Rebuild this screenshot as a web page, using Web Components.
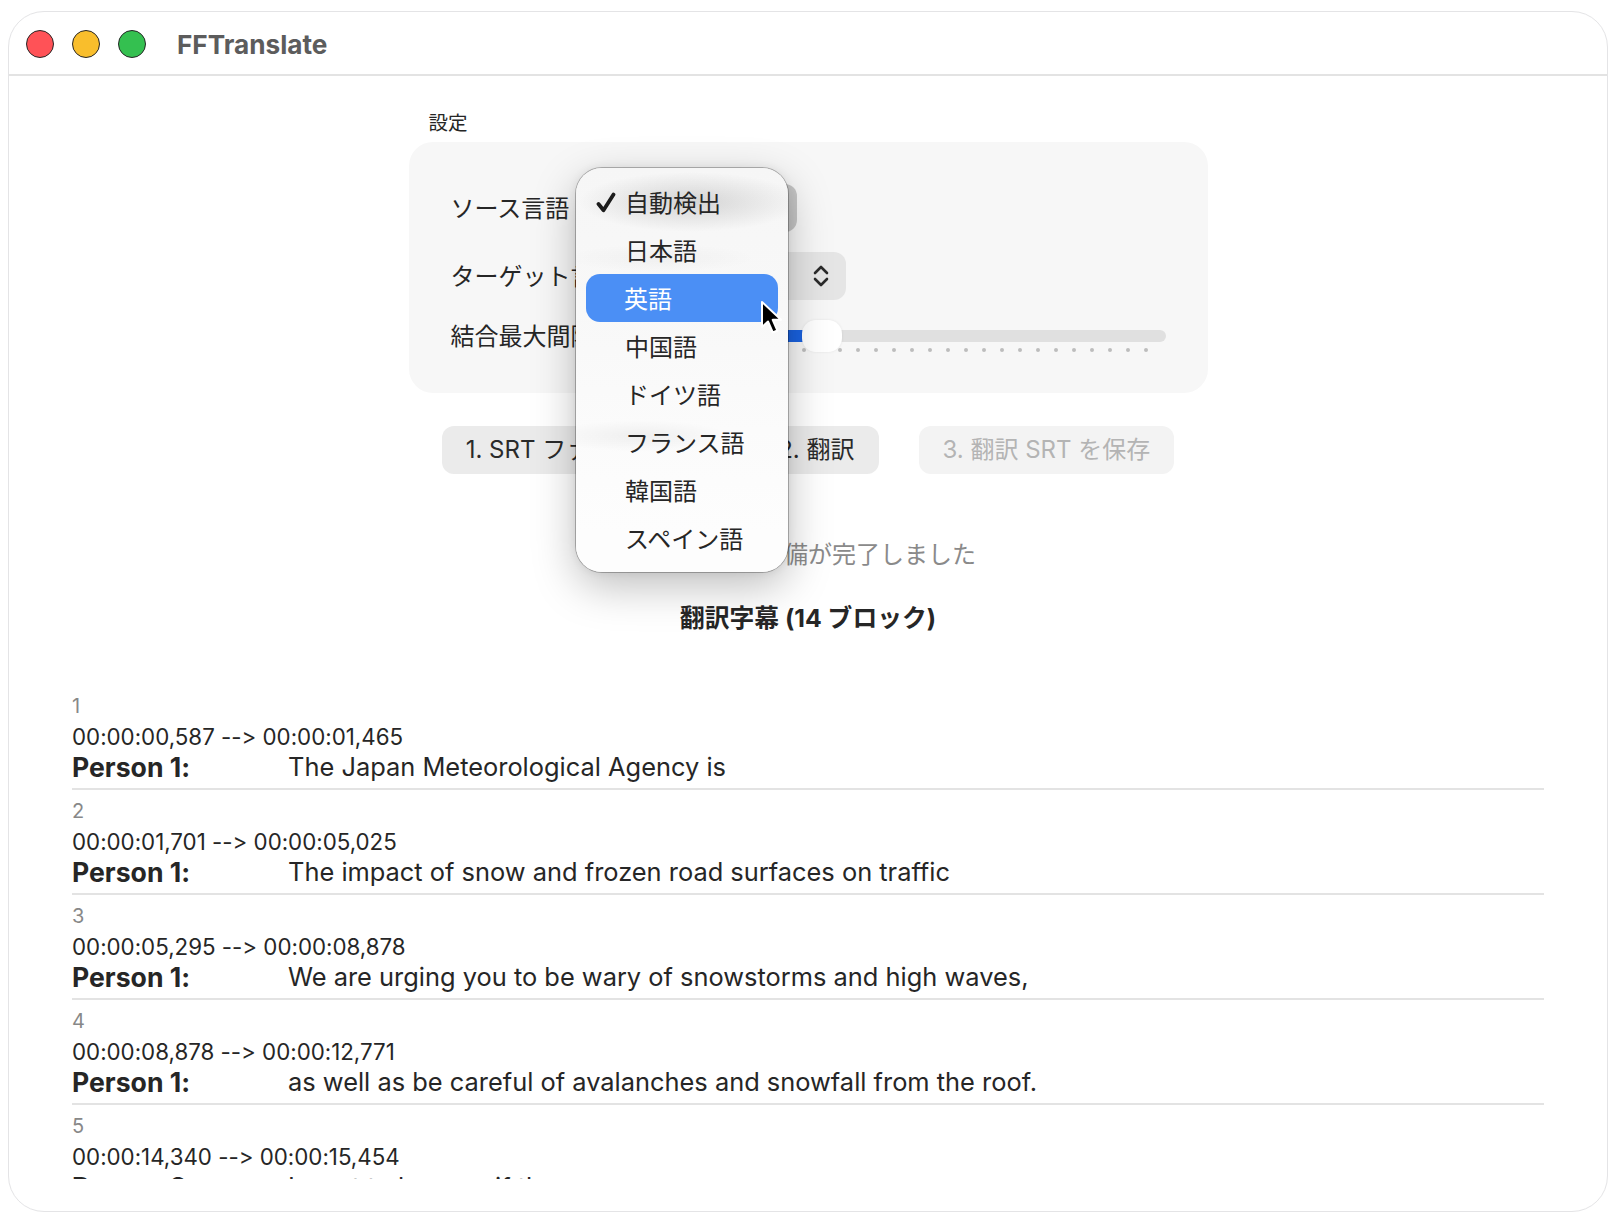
<!DOCTYPE html>
<html lang="ja">
<head>
<meta charset="utf-8">
<title>FFTranslate</title>
<style>
  html, body { margin: 0; background: #fff; }
  body {
    padding: 11px 11px 11px 8px;
    font-family: Inter, "Noto Sans CJK JP", sans-serif;
    font-feature-settings: "calt" 0;
    font-variant-ligatures: none;
    color: #262626;
  }
</style>
</head>
<body>
<ff-window>
  <ff-titlebar slot="titlebar">FFTranslate</ff-titlebar>
  <ff-settings>
    <ff-select label="ソース言語" value="自動検出" width="216" pressed></ff-select>
    <ff-select label="ターゲット言語" value="英語" width="215"></ff-select>
    <ff-slider label="結合最大間隔 (0.5秒)"></ff-slider>
  </ff-settings>
  <ff-actions>
    <ff-button style="padding-right: 28px">1. SRT ファイル選択</ff-button>
    <ff-button>2. 翻訳</ff-button>
    <ff-button disabled>3. 翻訳 SRT を保存</ff-button>
  </ff-actions>
  <ff-status>ファイルの準備が完了しました</ff-status>
  <ff-heading>翻訳字幕 (14 ブロック)</ff-heading>
  <ff-subtitles>
    <ff-cue index="1" time="00:00:00,587 --> 00:00:01,465" speaker="Person 1:">The Japan Meteorological Agency is</ff-cue>
    <ff-cue index="2" time="00:00:01,701 --> 00:00:05,025" speaker="Person 1:">The impact of snow and frozen road surfaces on traffic</ff-cue>
    <ff-cue index="3" time="00:00:05,295 --> 00:00:08,878" speaker="Person 1:">We are urging you to be wary of snowstorms and high waves,</ff-cue>
    <ff-cue index="4" time="00:00:08,878 --> 00:00:12,771" speaker="Person 1:">as well as be careful of avalanches and snowfall from the roof.</ff-cue>
    <ff-cue index="5" time="00:00:14,340 --> 00:00:15,454" speaker="Person 2:">I want to be sure if the</ff-cue>
  </ff-subtitles>
  <ff-menu slot="overlay">
    <ff-menu-item checked>自動検出</ff-menu-item>
    <ff-menu-item>日本語</ff-menu-item>
    <ff-menu-item active>英語</ff-menu-item>
    <ff-menu-item>中国語</ff-menu-item>
    <ff-menu-item>ドイツ語</ff-menu-item>
    <ff-menu-item>フランス語</ff-menu-item>
    <ff-menu-item>韓国語</ff-menu-item>
    <ff-menu-item>スペイン語</ff-menu-item>
  </ff-menu>
</ff-window>

<script>
class FFElement extends HTMLElement {
  constructor() {
    super()
    this.attachShadow({ mode: 'open' })
  }

  connectedCallback() {
    this.shadowRoot.innerHTML = this.render()
  }

  attr(name) {
    return this.getAttribute(name) || ''
  }
}

class FFWindow extends FFElement {
  render() {
    return `
      <style>
        :host {
          display: flex;
          flex-direction: column;
          position: relative;
          box-sizing: border-box;
          width: 1600px;
          height: 1201px;
          border: 1px solid #e4e4e6;
          border-radius: 36px;
          background: #fff;
          overflow: hidden;
        }
        main {
          display: flex;
          flex-direction: column;
          padding: 34px 0 0;
        }
      </style>
      <slot name="titlebar"></slot>
      <main><slot></slot></main>
      <slot name="overlay"></slot>
    `
  }
}

class FFTitlebar extends FFElement {
  render() {
    return `
      <style>
        :host {
          display: flex;
          align-items: center;
          box-sizing: border-box;
          height: 64px;
          padding: 2px 0 0 17px;
          border-bottom: 2px solid #e3e3e3;
        }
        .lights { display: flex; gap: 18px; margin-right: 31px; }
        .lights i {
          box-sizing: border-box;
          width: 28px;
          height: 28px;
          border-radius: 50%;
          border: 1px solid;
        }
        .red { background: #ff5257; border-color: #e8383f; }
        .yellow { background: #f9be2c; border-color: #efad1c; }
        .green { background: #34c050; border-color: #17b03c; }
        span { font-size: 26.2px; font-weight: 700; color: #5c5c5c; }
      </style>
      <div class="lights"><i class="red"></i><i class="yellow"></i><i class="green"></i></div>
      <span><slot></slot></span>
    `
  }
}

class FFSettings extends FFElement {
  render() {
    return `
      <style>
        :host { display: block; width: 799px; margin: 0 auto; }
        h2 {
          margin: 1px 0 7px 20px;
          font-size: 19.5px;
          font-weight: 400;
          line-height: 24px;
        }
        .panel {
          box-sizing: border-box;
          display: flex;
          flex-direction: column;
          gap: 20px;
          height: 251px;
          padding: 42px 42px 0 42px;
          border-radius: 24px;
          background: #f7f7f7;
        }
      </style>
      <h2>設定</h2>
      <div class="panel"><slot></slot></div>
    `
  }
}

class FFSelect extends FFElement {
  render() {
    return `
      <style>
        :host {
          display: flex;
          align-items: center;
          gap: 12px;
          height: 48px;
          font-size: 24px;
        }
        .label { padding-bottom: 4px; }
        .box {
          box-sizing: border-box;
          display: flex;
          align-items: center;
          justify-content: space-between;
          width: ${this.attr('width')}px;
          height: 48px;
          padding: 0 16px 0 20px;
          border-radius: 12px;
          background: ${this.hasAttribute('pressed') ? '#c6c6c6' : '#e5e5e5'};
        }
        svg { display: block; }
      </style>
      <span class="label">${this.attr('label')}</span>
      <div class="box">
        <span>${this.attr('value')}</span>
        <svg width="18" height="22" viewBox="0 0 18 22" fill="none" stroke="#2b2b2b" stroke-width="2.6" stroke-linecap="round" stroke-linejoin="round">
          <path d="M3 8l6-6 6 6"/><path d="M3 14l6 6 6-6"/>
        </svg>
      </div>
    `
  }
}

class FFSlider extends FFElement {
  render() {
    const ticks = Array.from({ length: 23 }, () => '<i></i>').join('')
    return `
      <style>
        :host {
          display: flex;
          gap: 16px;
          height: 32px;
          font-size: 24px;
          line-height: 32px;
        }
        .label { width: 270px; padding-top: 1px; white-space: nowrap; }
        .slider { position: relative; flex: 1; padding-top: 10px; }
        .track {
          height: 12px;
          border-radius: 6px;
          background: linear-gradient(90deg, #1a62e0 80px, #e0e0e0 80px);
        }
        .ticks { display: flex; gap: 14px; margin: 6px 0 0 11px; }
        .ticks i { width: 4px; height: 4px; border-radius: 50%; background: #bdbdbd; }
        .thumb {
          position: absolute;
          left: 65px;
          top: 0;
          width: 40px;
          height: 32px;
          border-radius: 14px;
          background: #fff;
          box-shadow: 0 0 3px rgba(0, 0, 0, 0.08);
        }
      </style>
      <div class="label">${this.attr('label')}</div>
      <div class="slider">
        <div class="track"></div>
        <div class="ticks">${ticks}</div>
        <div class="thumb"></div>
      </div>
    `
  }
}

class FFActions extends FFElement {
  render() {
    return `
      <style>
        :host { display: flex; justify-content: center; gap: 40px; margin-top: 33px; }
      </style>
      <slot></slot>
    `
  }
}

class FFButton extends FFElement {
  render() {
    const disabled = this.hasAttribute('disabled')
    return `
      <style>
        :host {
          display: block;
          padding: 0 24px;
          font-size: 24px;
          line-height: 48px;
          white-space: nowrap;
          border-radius: 12px;
          background: ${disabled ? '#f3f3f3' : '#ebebeb'};
          color: ${disabled ? '#b4b4b4' : '#2a2a2a'};
        }
      </style>
      <slot></slot>
    `
  }
}

class FFStatus extends FFElement {
  render() {
    return `
      <style>
        :host {
          display: block;
          margin-top: 65px;
          text-align: center;
          font-size: 24px;
          line-height: 32px;
          color: #8a8a8a;
        }
      </style>
      <slot></slot>
    `
  }
}

class FFHeading extends FFElement {
  render() {
    return `
      <style>
        :host {
          display: block;
          margin-top: 31px;
          text-align: center;
          font-size: 24.8px;
          font-weight: 700;
          line-height: 32px;
        }
      </style>
      <slot></slot>
    `
  }
}

class FFSubtitles extends FFElement {
  render() {
    return `
      <style>
        :host {
          display: flex;
          flex-direction: column;
          gap: 8px;
          height: 486px;
          margin: 59px 63px 0;
          overflow: hidden;
        }
      </style>
      <slot></slot>
    `
  }
}

class FFCue extends FFElement {
  render() {
    return `
      <style>
        :host {
          display: block;
          flex: none;
          padding-bottom: 6px;
          border-bottom: 2px solid #e3e3e3;
        }
        .index { font-size: 20px; line-height: 27px; margin-bottom: 2px; color: #888; }
        .time { font-size: 22.3px; line-height: 30px; white-space: nowrap; }
        .line { display: flex; font-size: 25.42px; line-height: 30px; white-space: nowrap; }
        b { width: 216px; flex: none; font-size: 26.6px; }
      </style>
      <div class="index">${this.attr('index')}</div>
      <div class="time">${this.attr('time').replace('>', '&gt;')}</div>
      <div class="line"><b>${this.attr('speaker')}</b><span><slot></slot></span></div>
    `
  }
}

class FFMenu extends FFElement {
  render() {
    return `
      <style>
        :host {
          position: absolute;
          left: 567px;
          top: 156px;
          box-sizing: border-box;
          width: 212px;
          padding: 10px 10px;
          border-radius: 26px;
          /* stands in for the blurred content behind the menu */
          background:
            radial-gradient(112px 30px at 54% 34px, rgba(0, 0, 0, 0.14), transparent),
            radial-gradient(96px 14px at 40% 90px, rgba(0, 0, 0, 0.03), transparent),
            radial-gradient(90px 16px at 30% 268px, rgba(0, 0, 0, 0.05), transparent),
            linear-gradient(180deg, #f6f6f6 0, #f8f8f8 35%, #fbfbfb 65%, #fdfdfd 90%);
          box-shadow: 0 0 0 1px rgba(0, 0, 0, 0.26), 0 14px 44px rgba(0, 0, 0, 0.26), 0 0 10px rgba(0, 0, 0, 0.08);
        }
        .cursor {
          position: absolute;
          left: 184px;
          top: 132px;
          display: block;
        }
      </style>
      <slot></slot>
      <svg class="cursor" width="24" height="36" viewBox="0 0 24 36">
        <path d="M2 2v25l6-5.5 4.8 11 4.6-2-4.7-10.7h8.3z" fill="#000" stroke="#fff" stroke-width="2" stroke-linejoin="round"/>
      </svg>
    `
  }
}

class FFMenuItem extends FFElement {
  render() {
    const active = this.hasAttribute('active')
    const check = this.hasAttribute('checked')
      ? `<svg width="20" height="21" viewBox="0 0 20 21" fill="none" stroke="#1c1c1c" stroke-width="3.8" stroke-linecap="round" stroke-linejoin="round"><path d="M2.5 12l5 6.2L17.5 2.5"/></svg>`
      : ''
    return `
      <style>
        :host {
          display: block;
          position: relative;
          box-sizing: border-box;
          height: 48px;
          padding: 2px 0 0 ${active ? 38 : 39}px;
          font-size: 24px;
          line-height: 48px;
          border-radius: 14px;
          color: ${active ? '#fff' : '#262626'};
          background: ${active ? '#4b8ff5' : 'transparent'};
        }
        svg { position: absolute; left: 10px; top: 14px; }
      </style>
      ${check}<slot></slot>
    `
  }
}

customElements.define('ff-window', FFWindow)
customElements.define('ff-titlebar', FFTitlebar)
customElements.define('ff-settings', FFSettings)
customElements.define('ff-select', FFSelect)
customElements.define('ff-slider', FFSlider)
customElements.define('ff-actions', FFActions)
customElements.define('ff-button', FFButton)
customElements.define('ff-status', FFStatus)
customElements.define('ff-heading', FFHeading)
customElements.define('ff-subtitles', FFSubtitles)
customElements.define('ff-cue', FFCue)
customElements.define('ff-menu', FFMenu)
customElements.define('ff-menu-item', FFMenuItem)
</script>
</body>
</html>
